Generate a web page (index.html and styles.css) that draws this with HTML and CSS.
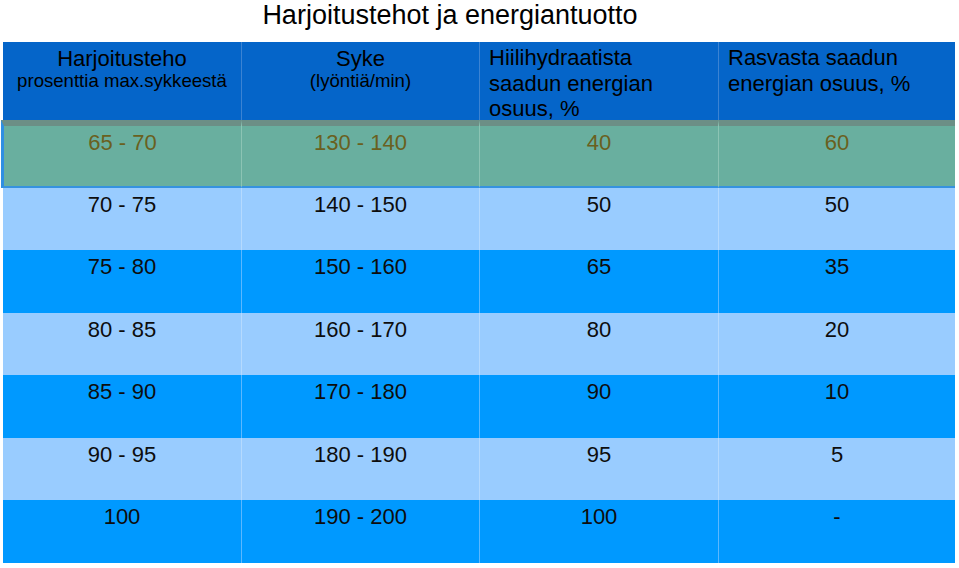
FILE: index.html
```html
<!DOCTYPE html>
<html lang="fi">
<head>
<meta charset="utf-8">
<title>Harjoitustehot ja energiantuotto</title>
<link rel="stylesheet" href="styles.css">
</head>
<body>
<h1 class="title">Harjoitustehot ja energiantuotto</h1>
<div class="grid">
  <div class="hcell center"><div class="h-main">Harjoitusteho</div><div class="h-sub">prosenttia max.sykkeestä</div></div>
  <div class="hcell center sep"><div class="h-main">Syke</div><div class="h-sub">(lyöntiä/min)</div></div>
  <div class="hcell left sep">Hiilihydraatista saadun energian osuus, %</div>
  <div class="hcell left sep">Rasvasta saadun energian osuus, %</div>

  <div class="cell green first">65 - 70</div>
  <div class="cell green sep">130 - 140</div>
  <div class="cell green sep">40</div>
  <div class="cell green sep">60</div>

  <div class="cell light">70 - 75</div>
  <div class="cell light sep">140 - 150</div>
  <div class="cell light sep">50</div>
  <div class="cell light sep">50</div>

  <div class="cell bright">75 - 80</div>
  <div class="cell bright sep">150 - 160</div>
  <div class="cell bright sep">65</div>
  <div class="cell bright sep">35</div>

  <div class="cell light">80 - 85</div>
  <div class="cell light sep">160 - 170</div>
  <div class="cell light sep">80</div>
  <div class="cell light sep">20</div>

  <div class="cell bright">85 - 90</div>
  <div class="cell bright sep">170 - 180</div>
  <div class="cell bright sep">90</div>
  <div class="cell bright sep">10</div>

  <div class="cell light">90 - 95</div>
  <div class="cell light sep">180 - 190</div>
  <div class="cell light sep">95</div>
  <div class="cell light sep">5</div>

  <div class="cell bright">100</div>
  <div class="cell bright sep">190 - 200</div>
  <div class="cell bright sep">100</div>
  <div class="cell bright sep">-</div>
</div>
</body>
</html>
```
FILE: styles.css
```css
html, body {
  margin: 0;
  padding: 0;
  background: #ffffff;
}
body {
  font-family: "Liberation Sans", Arial, sans-serif;
  color: #000;
}
.title {
  margin: 0;
  width: 900px;
  height: 42px;
  box-sizing: border-box;
  padding-top: 0;
  font-size: 27px;
  line-height: 30px;
  font-weight: normal;
  text-align: center;
  color: #000;
}
.grid {
  margin-left: 3px;
  width: 952px;
  display: grid;
  grid-template-columns: 238px 238px 239px 237px;
  grid-template-rows: 78px 68px 62px 63px 62px 63px 62px 63px;
}
.hcell {
  background: #0565c9;
  color: #000;
  box-sizing: border-box;
}
.hcell.center {
  text-align: center;
  padding-top: 5px;
}
.hcell.left {
  text-align: left;
  font-size: 22px;
  line-height: 25.5px;
  padding: 3px 8px 0 9px;
}
.h-main {
  font-size: 22px;
  line-height: 24px;
}
.h-sub {
  font-size: 18.6px;
  line-height: 19px;
}
.hcell.sep {
  border-left: 1px solid #3b83d3;
}
.cell {
  box-sizing: border-box;
  text-align: center;
  font-size: 22px;
  line-height: 25px;
  padding-top: 4px;
  color: #0d0d0d;
}
.green {
  background: #69af9f;
  color: #6a6020;
  border-top: 6px solid #6c8f86;
  border-bottom: 2px solid #3592e0;
}
.green.first {
  border-left: 3px solid #2f8fe2;
  margin-left: -2px;
}
.green.sep {
  border-left: 1px solid #8cc4b4;
}
.light {
  background: #99ccff;
}
.light.sep {
  border-left: 1px solid #b5daff;
}
.bright {
  background: #0099ff;
}
.bright.sep {
  border-left: 1px solid #5cb8ff;
}
```
